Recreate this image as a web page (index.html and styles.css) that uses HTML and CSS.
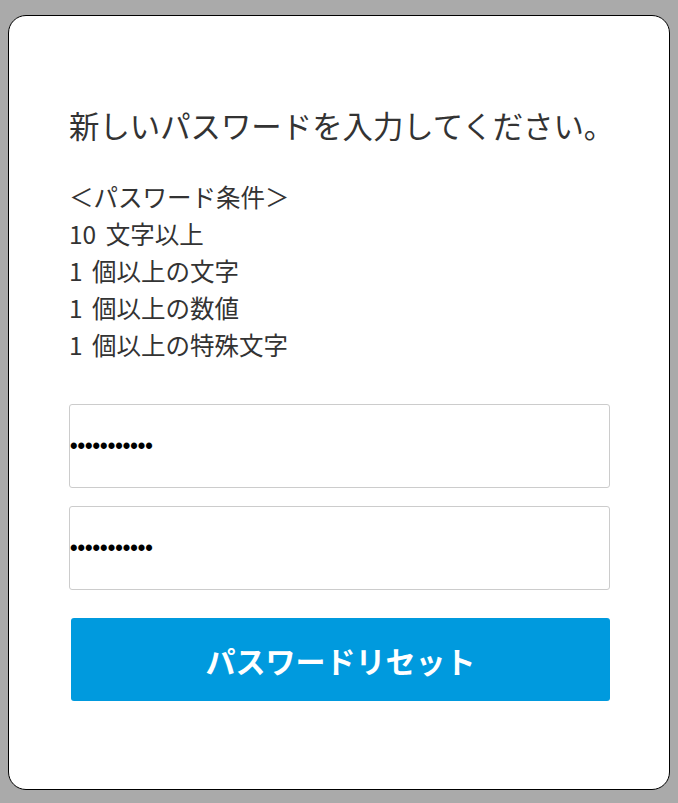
FILE: index.html
```html
<!DOCTYPE html>
<html lang="ja">
<head>
    <meta charset="UTF-8">
    <meta name="viewport" content="width=device-width, initial-scale=1.0">
    <title>パスワードリセット</title>
    <link rel="stylesheet" href="styles.css">
</head>
<body>
    <div class="card">
        <p class="lead">新しいパスワードを入力してください。</p>

        <div class="rules">
            <div>＜パスワード条件＞</div>
            <div>10 文字以上</div>
            <div>1 個以上の文字</div>
            <div>1 個以上の数値</div>
            <div>1 個以上の特殊文字</div>
        </div>

        <form class="reset-form" onsubmit="return false;">
            <input type="password" class="field" value="aaaaaaaaaaa">
            <input type="password" class="field" value="aaaaaaaaaaa">
            <button type="submit" class="reset-btn">パスワードリセット</button>
        </form>
    </div>
</body>
</html>
```

FILE: styles.css
```css
html, body {
    height: 100%;
}

body {
    margin: 0;
    padding: 15px 8px 13px;
    box-sizing: border-box;
    background-color: #aaaaaa;
    font-family: "Noto Sans CJK JP", "Noto Sans", sans-serif;
    color: #333;
}

.card {
    height: 100%;
    box-sizing: border-box;
    background-color: white;
    border: 1px solid #000;
    border-radius: 18px;
    padding: 88px 59px 0 60px;
}

.lead {
    margin: 0;
    font-size: 30.4px;
    line-height: 42px;
    white-space: nowrap;
}

.rules {
    margin-top: 32px;
    font-size: 24.5px;
    line-height: 37px;
    word-spacing: 4px;
}

.reset-form {
    margin-top: 41px;
    display: flex;
    flex-direction: column;
}

.field {
    height: 84px;
    box-sizing: border-box;
    margin: 0 0 18px;
    padding: 0;
    border: 1px solid #cccccc;
    border-radius: 3px;
    font-family: "Liberation Sans", Arial, sans-serif;
    font-size: 21.5px;
    font-weight: bold;
    color: #000;
    outline: none;
}

.reset-btn {
    height: 83px;
    margin: 10px 0 0 2px;
    border: none;
    border-radius: 3px;
    background-color: #009ade;
    color: white;
    font-family: "Noto Sans CJK JP", "Noto Sans", sans-serif;
    font-size: 30px;
    font-weight: bold;
    cursor: pointer;
}
```
